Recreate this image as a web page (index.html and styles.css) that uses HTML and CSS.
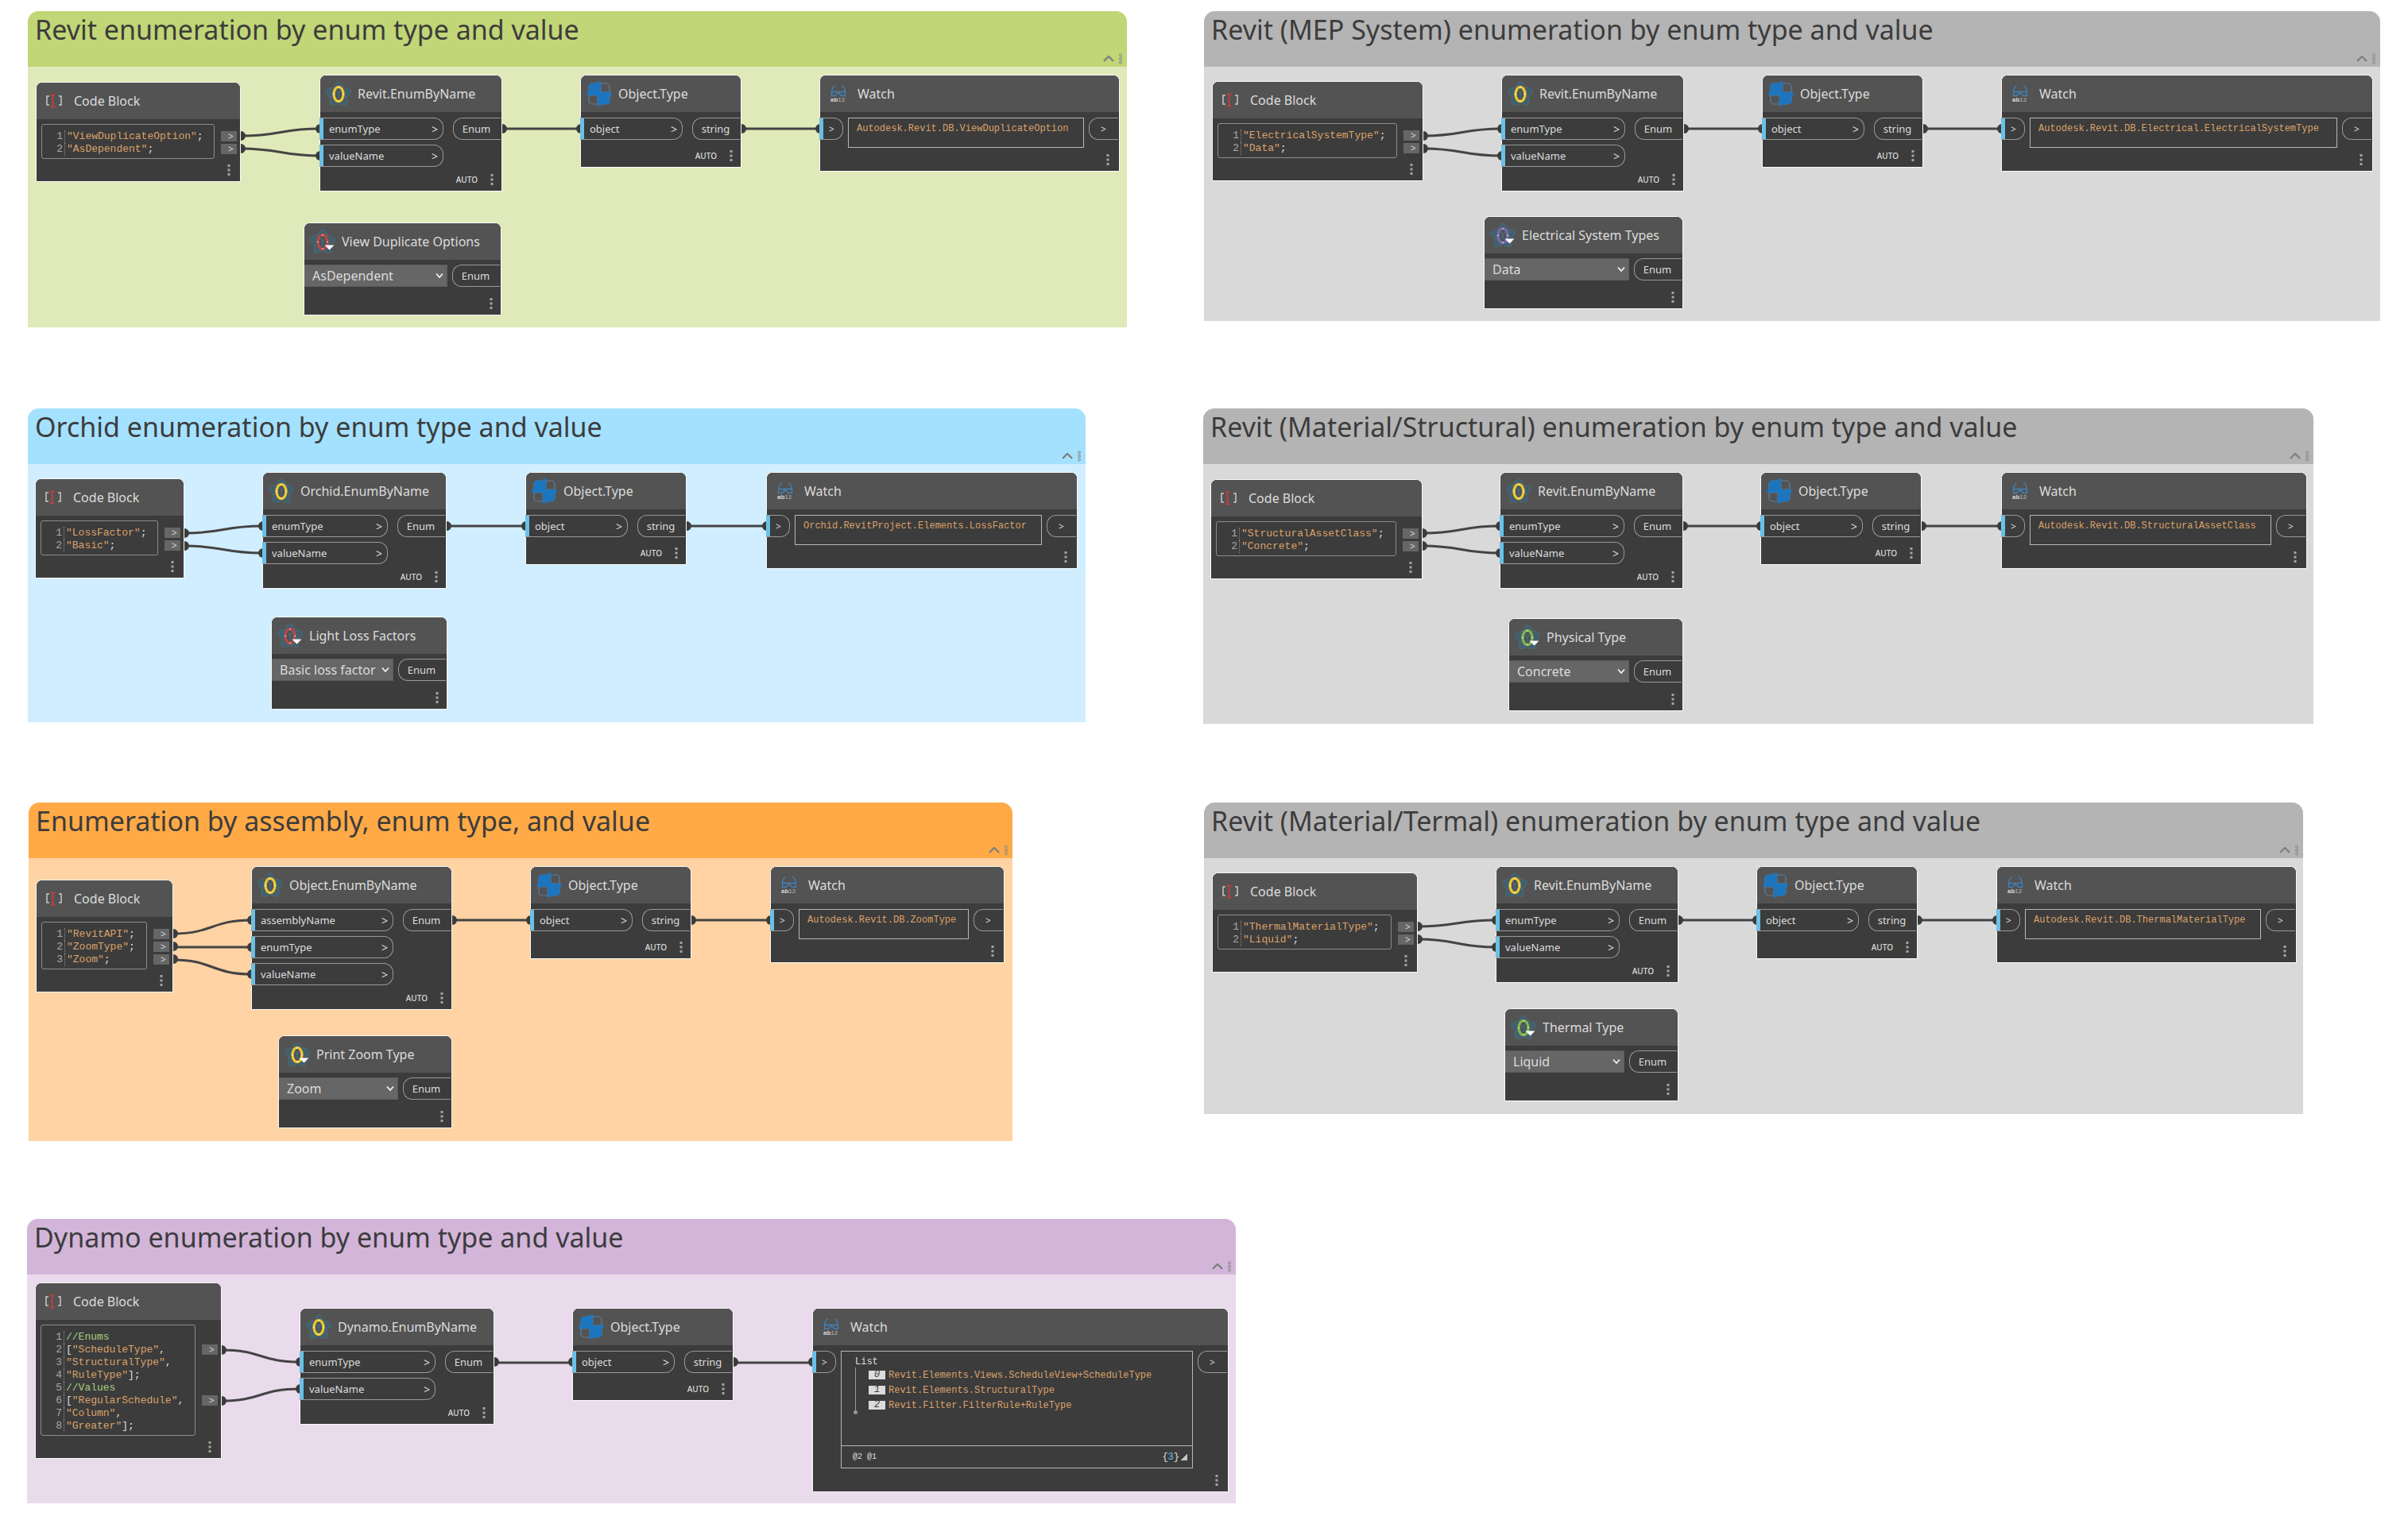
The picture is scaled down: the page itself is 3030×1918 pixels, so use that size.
FILE: index.html
```html
<!DOCTYPE html>
<html lang="en">
<head>
<meta charset="utf-8">
<title>Enumeration graph</title>
<link rel="stylesheet" href="styles.css">
</head>
<body>
<svg class="sprite" aria-hidden="true">
  <symbol id="i-code" viewBox="0 0 32 32">
    <path d="M9 10H6v11h3M21 10h3v11h-3" fill="none" stroke="#c8c8c8" stroke-width="1.5"/>
    <path d="M10.5 8.5h6M10.5 23.5h6M13.5 8v16" fill="none" stroke="#b8423f" stroke-width="2"/>
  </symbol>
  <symbol id="i-flower" viewBox="0 0 32 32">
    <g fill="#41606f" stroke="#5a727e" stroke-width=".5">
      <path id="petal" d="M16 17C8 14 7 6 16 .5 25 6 24 14 16 17z"/>
      <use href="#petal" transform="rotate(72 16 17)"/>
      <use href="#petal" transform="rotate(144 16 17)"/>
      <use href="#petal" transform="rotate(216 16 17)"/>
      <use href="#petal" transform="rotate(288 16 17)"/>
    </g>
    <ellipse cx="16" cy="16.5" rx="6" ry="9" fill="#45565f" stroke="currentColor" stroke-width="3.2"/>
    <path d="M13.5 12l2.5 4 2.5-4M16 16v6" fill="none" stroke="#64757e" stroke-width=".8"/>
    <g fill="#fff"><circle cx="16" cy="8" r=".8"/><circle cx="16" cy="25" r=".8"/><circle cx="10" cy="16.5" r=".8"/><circle cx="22" cy="16.5" r=".8"/></g>
  </symbol>
  <symbol id="i-flower-menu" viewBox="0 0 32 32">
    <use href="#i-flower" width="32" height="32"/>
    <path d="M18.5 20.5h12l-6 6z" fill="#fff"/>
  </symbol>
  <symbol id="i-type" viewBox="0 0 32 32">
    <rect x="3" y="3" width="26" height="26" rx="4.5" fill="none" stroke="#5d7f9e" stroke-width="1.2"/>
    <path d="M6 3h10v13H3V6q0-3 3-3zM16 16h13v10q0 3-3 3H16z" fill="#1c75bf"/>
    <path d="M18 3v11h11M14 29V18H3" fill="none" stroke="#5d7f9e"/>
    <path d="M14 .5h4V14h13.5v4H18v13.5h-4V18H.5v-4H14z" fill="#1c75bf"/>
  </symbol>
  <symbol id="i-watch" viewBox="0 0 32 32">
    <path d="M11.5 5.5C9.500 7 8 10 7.5 13.500v5h4.5l4-4 4 4h4.5v-5C24 10 22.5 7 20.5 5.500M7.5 13.500h17" fill="none" stroke="#3f83bd" stroke-width="1.3"/>
    <text x="6" y="26" class="icon-text">ab<tspan fill="#9c9c9c">12</tspan></text>
  </symbol>
  <symbol id="i-dots" viewBox="0 0 4 16">
    <path d="M.5 1h3v3h-3zM.5 6.500h3v3h-3zM.5 12h3v3h-3z" fill="#a3a3a3"/>
  </symbol>
  <symbol id="i-rings" viewBox="0 0 6 14">
    <g fill="none" stroke="#858585"><circle cx="3" cy="2.5" r="1.5"/><circle cx="3" cy="7" r="1.5"/><circle cx="3" cy="11.5" r="1.5"/></g>
  </symbol>
  <symbol id="i-up" viewBox="0 0 14 8">
    <path d="M1 7l6-6 6 6" fill="none" stroke="#808080" stroke-width="2.4"/>
  </symbol>
  <symbol id="i-down" viewBox="0 0 10 8">
    <path d="M1 1.500l4 4.500 4-4.500" fill="none" stroke="#f2f2f2" stroke-width="1.8"/>
  </symbol>
</svg>

<main class="canvas">

<section class="group green" style="--x:35px;--y:14px;--w:1383px;--h:398px">
  <header class="group-head"><h2>Revit enumeration by enum type and value</h2><div class="group-tools"><button aria-label="Collapse"><svg class="up"><use href="#i-up"/></svg></button><button aria-label="Group menu"><svg class="rings"><use href="#i-rings"/></svg></button></div></header>
  <svg class="wires" aria-hidden="true">
    <path d="M268 157C318 157 318 148 367 148M268 173C318 173 318 182 367 182M597 148H696M898 148H997"/>
    <g><circle cx="268" cy="157" r="6"/><circle cx="268" cy="173" r="6"/><circle cx="368" cy="148" r="6"/><circle cx="368" cy="182" r="6"/><circle cx="597" cy="148" r="6"/><circle cx="696" cy="148" r="6"/><circle cx="898" cy="148" r="6"/><circle cx="997" cy="148" r="6"/></g>
  </svg>
  <article class="node" style="--x:10px;--y:89px;--w:258px">
    <h3><svg><use href="#i-code"/></svg>Code Block</h3>
    <div class="code-body"><ol class="code"><li><i>1</i><code><b>"ViewDuplicateOption"</b>;</code></li><li><i>2</i><code><b>"AsDependent"</b>;</code></li></ol><div class="code-outs"><button>&gt;</button><button>&gt;</button></div></div>
    <footer><button aria-label="Node menu"><svg><use href="#i-dots"/></svg></button></footer>
  </article>
  <article class="node" style="--x:367px;--y:80px;--w:230px">
    <h3><svg class="yellow"><use href="#i-flower"/></svg>Revit.EnumByName</h3>
    <div class="ports"><div class="ins"><button class="in">enumType<span>&gt;</span></button><button class="in">valueName<span>&gt;</span></button></div><button class="out">Enum</button></div>
    <footer><span>AUTO</span><button aria-label="Node menu"><svg><use href="#i-dots"/></svg></button></footer>
  </article>
  <article class="node" style="--x:347px;--y:266px;--w:249px">
    <h3><svg class="red"><use href="#i-flower-menu"/></svg>View Duplicate Options</h3>
    <div class="ports pick"><div class="select"><select aria-label="View Duplicate Options"><option>AsDependent</option></select><svg><use href="#i-down"/></svg></div><button class="out">Enum</button></div>
    <footer><button aria-label="Node menu"><svg><use href="#i-dots"/></svg></button></footer>
  </article>
  <article class="node" style="--x:695px;--y:80px;--w:203px">
    <h3><svg><use href="#i-type"/></svg>Object.Type</h3>
    <div class="ports"><div class="ins"><button class="in">object<span>&gt;</span></button></div><button class="out">string</button></div>
    <footer><span>AUTO</span><button aria-label="Node menu"><svg><use href="#i-dots"/></svg></button></footer>
  </article>
  <article class="node" style="--x:996px;--y:80px;--w:378px">
    <h3><svg><use href="#i-watch"/></svg>Watch</h3>
    <div class="watch"><button class="in">&gt;</button><output>Autodesk.Revit.DB.ViewDuplicateOption</output><button class="out">&gt;</button></div>
    <footer><button aria-label="Node menu"><svg><use href="#i-dots"/></svg></button></footer>
  </article>
</section>

<section class="group gray" style="--x:1515px;--y:14px;--w:1480px;--h:390px">
  <header class="group-head"><h2>Revit (MEP System) enumeration by enum type and value</h2><div class="group-tools"><button aria-label="Collapse"><svg class="up"><use href="#i-up"/></svg></button><button aria-label="Group menu"><svg class="rings"><use href="#i-rings"/></svg></button></div></header>
  <svg class="wires" aria-hidden="true">
    <path d="M276 157C325 157 325 148 374 148M276 173C325 173 325 182 374 182M604 148H702M905 148H1003"/>
    <g><circle cx="276" cy="157" r="6"/><circle cx="276" cy="173" r="6"/><circle cx="375" cy="148" r="6"/><circle cx="375" cy="182" r="6"/><circle cx="604" cy="148" r="6"/><circle cx="703" cy="148" r="6"/><circle cx="905" cy="148" r="6"/><circle cx="1004" cy="148" r="6"/></g>
  </svg>
  <article class="node" style="--x:10px;--y:88px;--w:266px">
    <h3><svg><use href="#i-code"/></svg>Code Block</h3>
    <div class="code-body"><ol class="code"><li><i>1</i><code><b>"ElectricalSystemType"</b>;</code></li><li><i>2</i><code><b>"Data"</b>;</code></li></ol><div class="code-outs"><button>&gt;</button><button>&gt;</button></div></div>
    <footer><button aria-label="Node menu"><svg><use href="#i-dots"/></svg></button></footer>
  </article>
  <article class="node" style="--x:374px;--y:80px;--w:230px">
    <h3><svg class="yellow"><use href="#i-flower"/></svg>Revit.EnumByName</h3>
    <div class="ports"><div class="ins"><button class="in">enumType<span>&gt;</span></button><button class="in">valueName<span>&gt;</span></button></div><button class="out">Enum</button></div>
    <footer><span>AUTO</span><button aria-label="Node menu"><svg><use href="#i-dots"/></svg></button></footer>
  </article>
  <article class="node" style="--x:352px;--y:258px;--w:251px">
    <h3><svg class="violet"><use href="#i-flower-menu"/></svg>Electrical System Types</h3>
    <div class="ports pick"><div class="select"><select aria-label="Electrical System Types"><option>Data</option></select><svg><use href="#i-down"/></svg></div><button class="out">Enum</button></div>
    <footer><button aria-label="Node menu"><svg><use href="#i-dots"/></svg></button></footer>
  </article>
  <article class="node" style="--x:702px;--y:80px;--w:203px">
    <h3><svg><use href="#i-type"/></svg>Object.Type</h3>
    <div class="ports"><div class="ins"><button class="in">object<span>&gt;</span></button></div><button class="out">string</button></div>
    <footer><span>AUTO</span><button aria-label="Node menu"><svg><use href="#i-dots"/></svg></button></footer>
  </article>
  <article class="node" style="--x:1003px;--y:80px;--w:468px">
    <h3><svg><use href="#i-watch"/></svg>Watch</h3>
    <div class="watch"><button class="in">&gt;</button><output>Autodesk.Revit.DB.Electrical.ElectricalSystemType</output><button class="out">&gt;</button></div>
    <footer><button aria-label="Node menu"><svg><use href="#i-dots"/></svg></button></footer>
  </article>
</section>

<section class="group blue" style="--x:35px;--y:514px;--w:1331px;--h:395px">
  <header class="group-head"><h2>Orchid enumeration by enum type and value</h2><div class="group-tools"><button aria-label="Collapse"><svg class="up"><use href="#i-up"/></svg></button><button aria-label="Group menu"><svg class="rings"><use href="#i-rings"/></svg></button></div></header>
  <svg class="wires" aria-hidden="true">
    <path d="M197 157C246 157 246 148 295 148M197 173C246 173 246 182 295 182M527 148H626M829 148H929"/>
    <g><circle cx="197" cy="157" r="6"/><circle cx="197" cy="173" r="6"/><circle cx="296" cy="148" r="6"/><circle cx="296" cy="182" r="6"/><circle cx="527" cy="148" r="6"/><circle cx="627" cy="148" r="6"/><circle cx="829" cy="148" r="6"/><circle cx="930" cy="148" r="6"/></g>
  </svg>
  <article class="node" style="--x:9px;--y:88px;--w:188px">
    <h3><svg><use href="#i-code"/></svg>Code Block</h3>
    <div class="code-body"><ol class="code"><li><i>1</i><code><b>"LossFactor"</b>;</code></li><li><i>2</i><code><b>"Basic"</b>;</code></li></ol><div class="code-outs"><button>&gt;</button><button>&gt;</button></div></div>
    <footer><button aria-label="Node menu"><svg><use href="#i-dots"/></svg></button></footer>
  </article>
  <article class="node" style="--x:295px;--y:80px;--w:232px">
    <h3><svg class="yellow"><use href="#i-flower"/></svg>Orchid.EnumByName</h3>
    <div class="ports"><div class="ins"><button class="in">enumType<span>&gt;</span></button><button class="in">valueName<span>&gt;</span></button></div><button class="out">Enum</button></div>
    <footer><span>AUTO</span><button aria-label="Node menu"><svg><use href="#i-dots"/></svg></button></footer>
  </article>
  <article class="node" style="--x:306px;--y:262px;--w:222px">
    <h3><svg class="red"><use href="#i-flower-menu"/></svg>Light Loss Factors</h3>
    <div class="ports pick"><div class="select"><select aria-label="Light Loss Factors"><option>Basic loss factor</option></select><svg><use href="#i-down"/></svg></div><button class="out">Enum</button></div>
    <footer><button aria-label="Node menu"><svg><use href="#i-dots"/></svg></button></footer>
  </article>
  <article class="node" style="--x:626px;--y:80px;--w:203px">
    <h3><svg><use href="#i-type"/></svg>Object.Type</h3>
    <div class="ports"><div class="ins"><button class="in">object<span>&gt;</span></button></div><button class="out">string</button></div>
    <footer><span>AUTO</span><button aria-label="Node menu"><svg><use href="#i-dots"/></svg></button></footer>
  </article>
  <article class="node" style="--x:929px;--y:80px;--w:392px">
    <h3><svg><use href="#i-watch"/></svg>Watch</h3>
    <div class="watch"><button class="in">&gt;</button><output>Orchid.RevitProject.Elements.LossFactor</output><button class="out">&gt;</button></div>
    <footer><button aria-label="Node menu"><svg><use href="#i-dots"/></svg></button></footer>
  </article>
</section>

<section class="group gray" style="--x:1514px;--y:514px;--w:1397px;--h:397px">
  <header class="group-head"><h2>Revit (Material/Structural) enumeration by enum type and value</h2><div class="group-tools"><button aria-label="Collapse"><svg class="up"><use href="#i-up"/></svg></button><button aria-label="Group menu"><svg class="rings"><use href="#i-rings"/></svg></button></div></header>
  <svg class="wires" aria-hidden="true">
    <path d="M276 157C325 157 325 148 373 148M276 173C325 173 325 182 373 182M604 148H701M904 148H1004"/>
    <g><circle cx="276" cy="157" r="6"/><circle cx="276" cy="173" r="6"/><circle cx="374" cy="148" r="6"/><circle cx="374" cy="182" r="6"/><circle cx="604" cy="148" r="6"/><circle cx="702" cy="148" r="6"/><circle cx="904" cy="148" r="6"/><circle cx="1005" cy="148" r="6"/></g>
  </svg>
  <article class="node" style="--x:9px;--y:89px;--w:267px">
    <h3><svg><use href="#i-code"/></svg>Code Block</h3>
    <div class="code-body"><ol class="code"><li><i>1</i><code><b>"StructuralAssetClass"</b>;</code></li><li><i>2</i><code><b>"Concrete"</b>;</code></li></ol><div class="code-outs"><button>&gt;</button><button>&gt;</button></div></div>
    <footer><button aria-label="Node menu"><svg><use href="#i-dots"/></svg></button></footer>
  </article>
  <article class="node" style="--x:373px;--y:80px;--w:231px">
    <h3><svg class="yellow"><use href="#i-flower"/></svg>Revit.EnumByName</h3>
    <div class="ports"><div class="ins"><button class="in">enumType<span>&gt;</span></button><button class="in">valueName<span>&gt;</span></button></div><button class="out">Enum</button></div>
    <footer><span>AUTO</span><button aria-label="Node menu"><svg><use href="#i-dots"/></svg></button></footer>
  </article>
  <article class="node" style="--x:384px;--y:264px;--w:220px">
    <h3><svg class="lime"><use href="#i-flower-menu"/></svg>Physical Type</h3>
    <div class="ports pick"><div class="select"><select aria-label="Physical Type"><option>Concrete</option></select><svg><use href="#i-down"/></svg></div><button class="out">Enum</button></div>
    <footer><button aria-label="Node menu"><svg><use href="#i-dots"/></svg></button></footer>
  </article>
  <article class="node" style="--x:701px;--y:80px;--w:203px">
    <h3><svg><use href="#i-type"/></svg>Object.Type</h3>
    <div class="ports"><div class="ins"><button class="in">object<span>&gt;</span></button></div><button class="out">string</button></div>
    <footer><span>AUTO</span><button aria-label="Node menu"><svg><use href="#i-dots"/></svg></button></footer>
  </article>
  <article class="node" style="--x:1004px;--y:80px;--w:385px">
    <h3><svg><use href="#i-watch"/></svg>Watch</h3>
    <div class="watch"><button class="in">&gt;</button><output>Autodesk.Revit.DB.StructuralAssetClass</output><button class="out">&gt;</button></div>
    <footer><button aria-label="Node menu"><svg><use href="#i-dots"/></svg></button></footer>
  </article>
</section>

<section class="group orange" style="--x:36px;--y:1010px;--w:1238px;--h:426px">
  <header class="group-head"><h2>Enumeration by assembly, enum type, and value</h2><div class="group-tools"><button aria-label="Collapse"><svg class="up"><use href="#i-up"/></svg></button><button aria-label="Group menu"><svg class="rings"><use href="#i-rings"/></svg></button></div></header>
  <svg class="wires" aria-hidden="true">
    <path d="M182 165C231 165 231 148 280 148M182 182H280M182 198C231 198 231 216 280 216M533 148H631M834 148H933"/>
    <g><circle cx="182" cy="165" r="6"/><circle cx="182" cy="181" r="6"/><circle cx="182" cy="197" r="6"/><circle cx="281" cy="148" r="6"/><circle cx="281" cy="182" r="6"/><circle cx="281" cy="216" r="6"/><circle cx="533" cy="148" r="6"/><circle cx="632" cy="148" r="6"/><circle cx="834" cy="148" r="6"/><circle cx="934" cy="148" r="6"/></g>
  </svg>
  <article class="node" style="--x:9px;--y:97px;--w:173px">
    <h3><svg><use href="#i-code"/></svg>Code Block</h3>
    <div class="code-body"><ol class="code"><li><i>1</i><code><b>"RevitAPI"</b>;</code></li><li><i>2</i><code><b>"ZoomType"</b>;</code></li><li><i>3</i><code><b>"Zoom"</b>;</code></li></ol><div class="code-outs"><button>&gt;</button><button>&gt;</button><button>&gt;</button></div></div>
    <footer><button aria-label="Node menu"><svg><use href="#i-dots"/></svg></button></footer>
  </article>
  <article class="node" style="--x:280px;--y:80px;--w:253px">
    <h3><svg class="yellow"><use href="#i-flower"/></svg>Object.EnumByName</h3>
    <div class="ports"><div class="ins"><button class="in">assemblyName<span>&gt;</span></button><button class="in">enumType<span>&gt;</span></button><button class="in">valueName<span>&gt;</span></button></div><button class="out">Enum</button></div>
    <footer><span>AUTO</span><button aria-label="Node menu"><svg><use href="#i-dots"/></svg></button></footer>
  </article>
  <article class="node" style="--x:314px;--y:293px;--w:219px">
    <h3><svg class="yellow"><use href="#i-flower-menu"/></svg>Print Zoom Type</h3>
    <div class="ports pick"><div class="select"><select aria-label="Print Zoom Type"><option>Zoom</option></select><svg><use href="#i-down"/></svg></div><button class="out">Enum</button></div>
    <footer><button aria-label="Node menu"><svg><use href="#i-dots"/></svg></button></footer>
  </article>
  <article class="node" style="--x:631px;--y:80px;--w:203px">
    <h3><svg><use href="#i-type"/></svg>Object.Type</h3>
    <div class="ports"><div class="ins"><button class="in">object<span>&gt;</span></button></div><button class="out">string</button></div>
    <footer><span>AUTO</span><button aria-label="Node menu"><svg><use href="#i-dots"/></svg></button></footer>
  </article>
  <article class="node" style="--x:933px;--y:80px;--w:295px">
    <h3><svg><use href="#i-watch"/></svg>Watch</h3>
    <div class="watch"><button class="in">&gt;</button><output>Autodesk.Revit.DB.ZoomType</output><button class="out">&gt;</button></div>
    <footer><button aria-label="Node menu"><svg><use href="#i-dots"/></svg></button></footer>
  </article>
</section>

<section class="group gray" style="--x:1515px;--y:1010px;--w:1383px;--h:392px">
  <header class="group-head"><h2>Revit (Material/Termal) enumeration by enum type and value</h2><div class="group-tools"><button aria-label="Collapse"><svg class="up"><use href="#i-up"/></svg></button><button aria-label="Group menu"><svg class="rings"><use href="#i-rings"/></svg></button></div></header>
  <svg class="wires" aria-hidden="true">
    <path d="M269 156C318 156 318 148 367 148M269 172C318 172 318 182 367 182M597 148H695M898 148H997"/>
    <g><circle cx="269" cy="156" r="6"/><circle cx="269" cy="172" r="6"/><circle cx="368" cy="148" r="6"/><circle cx="368" cy="182" r="6"/><circle cx="597" cy="148" r="6"/><circle cx="696" cy="148" r="6"/><circle cx="898" cy="148" r="6"/><circle cx="998" cy="148" r="6"/></g>
  </svg>
  <article class="node" style="--x:10px;--y:88px;--w:259px">
    <h3><svg><use href="#i-code"/></svg>Code Block</h3>
    <div class="code-body"><ol class="code"><li><i>1</i><code><b>"ThermalMaterialType"</b>;</code></li><li><i>2</i><code><b>"Liquid"</b>;</code></li></ol><div class="code-outs"><button>&gt;</button><button>&gt;</button></div></div>
    <footer><button aria-label="Node menu"><svg><use href="#i-dots"/></svg></button></footer>
  </article>
  <article class="node" style="--x:367px;--y:80px;--w:230px">
    <h3><svg class="yellow"><use href="#i-flower"/></svg>Revit.EnumByName</h3>
    <div class="ports"><div class="ins"><button class="in">enumType<span>&gt;</span></button><button class="in">valueName<span>&gt;</span></button></div><button class="out">Enum</button></div>
    <footer><span>AUTO</span><button aria-label="Node menu"><svg><use href="#i-dots"/></svg></button></footer>
  </article>
  <article class="node" style="--x:378px;--y:259px;--w:219px">
    <h3><svg class="lime"><use href="#i-flower-menu"/></svg>Thermal Type</h3>
    <div class="ports pick"><div class="select"><select aria-label="Thermal Type"><option>Liquid</option></select><svg><use href="#i-down"/></svg></div><button class="out">Enum</button></div>
    <footer><button aria-label="Node menu"><svg><use href="#i-dots"/></svg></button></footer>
  </article>
  <article class="node" style="--x:695px;--y:80px;--w:203px">
    <h3><svg><use href="#i-type"/></svg>Object.Type</h3>
    <div class="ports"><div class="ins"><button class="in">object<span>&gt;</span></button></div><button class="out">string</button></div>
    <footer><span>AUTO</span><button aria-label="Node menu"><svg><use href="#i-dots"/></svg></button></footer>
  </article>
  <article class="node" style="--x:997px;--y:80px;--w:378px">
    <h3><svg><use href="#i-watch"/></svg>Watch</h3>
    <div class="watch"><button class="in">&gt;</button><output>Autodesk.Revit.DB.ThermalMaterialType</output><button class="out">&gt;</button></div>
    <footer><button aria-label="Node menu"><svg><use href="#i-dots"/></svg></button></footer>
  </article>
</section>

<section class="group purple" style="--x:34px;--y:1534px;--w:1521px;--h:358px">
  <header class="group-head"><h2>Dynamo enumeration by enum type and value</h2><div class="group-tools"><button aria-label="Collapse"><svg class="up"><use href="#i-up"/></svg></button><button aria-label="Group menu"><svg class="rings"><use href="#i-rings"/></svg></button></div></header>
  <svg class="wires" aria-hidden="true">
    <path d="M245 165C294 165 294 180 343 180M245 229C294 229 294 214 343 214M588 181H686M889 181H988"/>
    <g><circle cx="245" cy="165" r="6"/><circle cx="245" cy="229" r="6"/><circle cx="344" cy="180" r="6"/><circle cx="344" cy="214" r="6"/><circle cx="588" cy="180" r="6"/><circle cx="687" cy="180" r="6"/><circle cx="889" cy="180" r="6"/><circle cx="989" cy="180" r="6"/></g>
  </svg>
  <article class="node" style="--x:10px;--y:80px;--w:235px">
    <h3><svg><use href="#i-code"/></svg>Code Block</h3>
    <div class="code-body"><ol class="code"><li><i>1</i><code><em>//Enums</em></code></li><li><i>2</i><code>[<b>"ScheduleType"</b>,</code></li><li><i>3</i><code><b>"StructuralType"</b>,</code></li><li><i>4</i><code><b>"RuleType"</b>];</code></li><li><i>5</i><code><em>//Values</em></code></li><li><i>6</i><code>[<b>"RegularSchedule"</b>,</code></li><li><i>7</i><code><b>"Column"</b>,</code></li><li><i>8</i><code><b>"Greater"</b>];</code></li></ol><div class="code-outs"><button class="line-2">&gt;</button><button class="line-6">&gt;</button></div></div>
    <footer><button aria-label="Node menu"><svg><use href="#i-dots"/></svg></button></footer>
  </article>
  <article class="node" style="--x:343px;--y:112px;--w:245px">
    <h3><svg class="yellow"><use href="#i-flower"/></svg>Dynamo.EnumByName</h3>
    <div class="ports"><div class="ins"><button class="in">enumType<span>&gt;</span></button><button class="in">valueName<span>&gt;</span></button></div><button class="out">Enum</button></div>
    <footer><span>AUTO</span><button aria-label="Node menu"><svg><use href="#i-dots"/></svg></button></footer>
  </article>
  <article class="node" style="--x:686px;--y:112px;--w:203px">
    <h3><svg><use href="#i-type"/></svg>Object.Type</h3>
    <div class="ports"><div class="ins"><button class="in">object<span>&gt;</span></button></div><button class="out">string</button></div>
    <footer><span>AUTO</span><button aria-label="Node menu"><svg><use href="#i-dots"/></svg></button></footer>
  </article>
  <article class="node" style="--x:988px;--y:112px;--w:524px">
    <h3><svg><use href="#i-watch"/></svg>Watch</h3>
    <div class="watch"><button class="in">&gt;</button>
      <div class="tree">
        <div class="tree-body"><p>List</p><ol><li><span>0</span>Revit.Elements.Views.ScheduleView+ScheduleType</li><li><span>1</span>Revit.Elements.StructuralType</li><li><span>2</span>Revit.Filter.FilterRule+RuleType</li></ol></div>
        <div class="tree-foot"><span>@2 @1</span><span class="count">{<b>3</b>}</span></div>
      </div>
      <button class="out">&gt;</button></div>
    <footer><button aria-label="Node menu"><svg><use href="#i-dots"/></svg></button></footer>
  </article>
</section>

</main>
</body>
</html>
```
FILE: styles.css
```css
* { box-sizing: border-box; margin: 0; padding: 0; }

body { background: #fff; font-family: "Noto Sans", "Open Sans", sans-serif; color: #dcdcdc; }
button { font: inherit; color: inherit; background: none; border: 0; cursor: pointer; }
ol { list-style: none; }
svg { display: block; }
.sprite { display: none; }
.icon-text { font: bold 8px "Liberation Sans", sans-serif; fill: #d8d8d8; }

.canvas { position: relative; min-height: 100vh; }

/* Groups: placed on the canvas by --x / --y */
.group {
  position: absolute; left: var(--x); top: var(--y); width: var(--w); min-height: var(--h);
  border-radius: 14px 14px 0 0; background: var(--tint);
}
.green  { --head: #c1d676; --tint: #e0e9b9; }
.gray   { --head: #b4b4b4; --tint: #d9d9d9; }
.blue   { --head: #a4e1ff; --tint: #d0eeff; }
.orange { --head: #ffaa46; --tint: #ffd3a3; }
.purple { --head: #d3b5da; --tint: #e9daec; }

.group-head {
  display: flex; justify-content: space-between; align-items: flex-end; height: 70px;
  border-radius: 14px 14px 0 0; background: var(--head); color: #3c3c3c;
}
.group-head h2 { align-self: flex-start; padding-left: 9px; font-size: 34px; font-weight: 400; line-height: 46px; white-space: nowrap; }
.group-tools { display: flex; align-items: center; gap: 5px; padding: 0 5px 3px 0; }
.up { width: 14px; height: 8px; }
.rings { width: 6px; height: 14px; }

.wires { position: absolute; left: 0; top: 0; width: 100%; height: 100%; }
.wires path { fill: none; stroke: #444; stroke-width: 3px; }
.wires circle { fill: #3c3c3c; }

/* Nodes */
.node {
  position: absolute; left: var(--x); top: var(--y); width: var(--w);
  border: 1px solid #fafafa; border-radius: 8px 8px 0 0; background: #3c3c3c;
}
.node h3 {
  display: flex; align-items: center; gap: 8px; height: 46px; padding-left: 7px;
  border-radius: 7px 7px 0 0; background: #535353; font-size: 16px; font-weight: 400; white-space: nowrap;
}
.node h3 svg { width: 32px; height: 32px; }
.yellow { color: #f3c62c; }
.red { color: #bf4541; }
.violet { color: #8067ab; }
.lime { color: #84b547; }

.node footer { display: flex; justify-content: flex-end; align-items: center; height: 28px; font-size: 10px; font-weight: 500; }
.node footer span { padding-right: 5px; }
.node footer button { display: flex; justify-content: center; width: 25px; }
.node footer svg { width: 4px; height: 16px; }
.code-body + footer button, .watch + footer button { width: 28px; }

.ports { display: flex; align-items: flex-start; gap: 12px; min-height: 41px; padding: 7px 0 2px; font-size: 13px; }
.pick { gap: 6px; padding-top: 6px; }
.ins { flex: 1; display: grid; gap: 6px; }
.in, .out { display: flex; align-items: center; height: 28px; border: 1px solid #999; }
.in {
  justify-content: space-between; margin-left: -1px; padding: 0 6px 0 12px; border-left: 0; border-radius: 0 12px 12px 0;
  background: linear-gradient(to right, #6ac0e7 5px, transparent 5px);
}
.in span { font-size: 14px; }
.out { justify-content: center; width: 60px; margin-right: 1px; padding-right: 2px; border-right: 0; border-radius: 12px 0 0 12px; }

.select { position: relative; flex: 1; }
.select select {
  width: 100%; height: 28px; padding-left: 10px; border: 1px solid #5c5c5c; border-left: 0; border-radius: 0;
  appearance: none; background: #666; color: #dcdcdc; font: 16px "Noto Sans", "Open Sans", sans-serif;
}
.select svg { position: absolute; right: 5px; top: 10px; width: 10px; height: 8px; pointer-events: none; }

/* Code block */
.code-body { display: flex; gap: 8px; padding: 6px 4px 0 6px; }
.code { flex: 1; padding: 7px 0 3px; border: 1px solid #8c8c8c; border-radius: 3px; font: 13px/16px "Liberation Mono", monospace; }
.code li { display: flex; height: 16px; white-space: pre; }
.code i { width: 29px; padding-right: 2px; border-right: 1px dotted #8c8c8c; color: #a8a8a8; font-style: normal; text-align: right; }
.code code { padding-left: 2px; font: inherit; }
.code b { color: #dba26a; font-weight: 400; }
.code em { color: #a7cf80; font-style: normal; }
.code-outs { display: grid; grid-auto-rows: 13px; gap: 3px; padding-top: 9px; align-content: start; }
.code-outs button { width: 20px; padding-left: 5px; background: #666; font-size: 12px; line-height: 13px; }
.line-2 { grid-row: 2; }
.line-6 { grid-row: 6; }
.code-outs:has(.line-6) { grid-template-rows: repeat(8, 13px); }

/* Watch */
.watch { display: flex; align-items: flex-start; gap: 6px; padding: 7px 0 1px; font-size: 12px; }
.watch .in { width: 30px; padding: 0 0 0 12px; }
.watch .out { width: 37px; padding-right: 1px; }
.watch output, .tree { flex: 1; border: 1px solid #b8b8b8; font: 12px/16px "Liberation Mono", monospace; color: #dba26a; white-space: nowrap; }
.watch output { height: 38px; padding: 5px 10px; }
.tree-body { min-height: 118px; padding: 6px 17px; }
.tree-body p { color: #dcdcdc; line-height: 14px; }
.tree-body ol { position: relative; padding-left: 16px; border-left: 1px solid #999; }
.tree-body ol::after { content: ""; position: absolute; left: -3px; bottom: -2px; width: 5px; height: 5px; border-radius: 50%; background: #999; }
.tree-body li { display: flex; align-items: center; gap: 4px; height: 19px; }
.tree-body li span { width: 21px; height: 11px; background: #dcdcdc; color: #3c3c3c; font-style: italic; line-height: 11px; text-align: center; }
.tree-foot { display: flex; justify-content: space-between; align-items: center; height: 28px; padding: 0 6px 0 14px; border-top: 1px solid #b8b8b8; color: #dcdcdc; font-size: 10px; }
.count { display: flex; align-items: center; font-size: 12px; }
.count b { color: #6ac0e7; font-weight: 400; }
.count::after { content: ""; width: 8px; height: 8px; margin-left: 2px; background: linear-gradient(135deg, transparent 50%, #c4c4c4 50%); }
```
